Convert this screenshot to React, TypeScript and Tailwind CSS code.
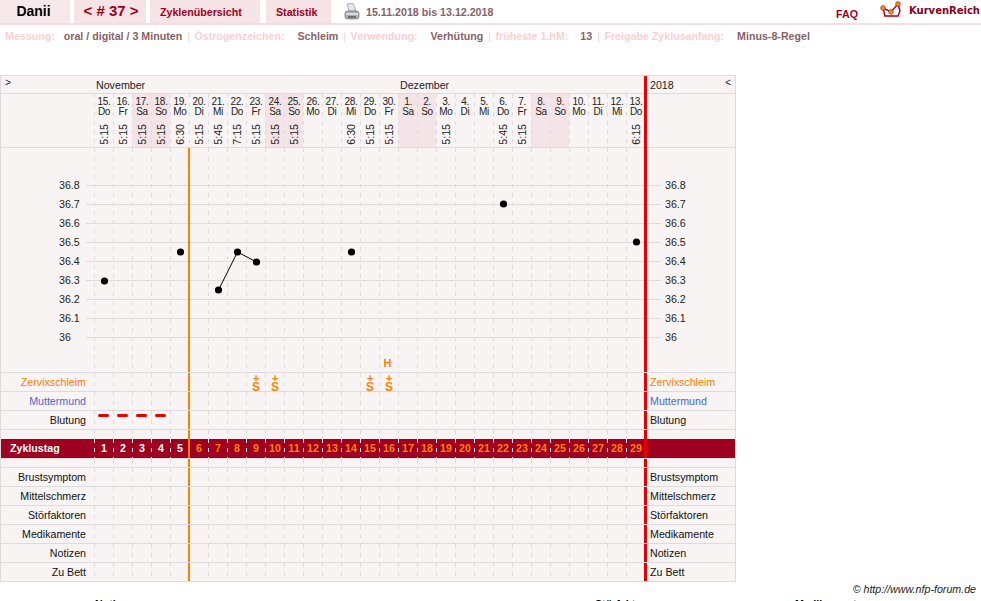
const weekdays = ["Do", "Fr", "Sa", "So", "Mo", "Di", "Mi"];
const times: Record<number, string> = {
  0: "5:15", 1: "5:15", 2: "5:15", 3: "5:15", 4: "6:30", 5: "5:15", 6: "5:45", 7: "7:15", 8: "5:15", 9: "5:15",
  10: "5:15", 13: "6:30", 14: "5:15", 15: "5:15", 18: "5:15", 21: "5:45", 22: "5:15", 28: "6:15",
};
const days = Array.from({ length: 29 }, (_, i) => {
  const date = i < 16 ? 15 + i : i - 15;
  const weekday = weekdays[i % 7];
  return { i, date, weekday, weekend: weekday === "Sa" || weekday === "So", time: times[i] };
});
const scale = ["36.8", "36.7", "36.6", "36.5", "36.4", "36.3", "36.2", "36.1", "36"];
const points = [
  { i: 0, y: 281 },
  { i: 4, y: 252 },
  { i: 6, y: 290 },
  { i: 7, y: 252 },
  { i: 8, y: 262 },
  { i: 13, y: 252 },
  { i: 21, y: 204 },
  { i: 28, y: 242 },
];
const dash = "bg-[linear-gradient(#dddbdb_4px,transparent_4px)] bg-[length:1px_9px] bg-repeat-y";
const dashLight = "bg-[linear-gradient(#f6e6e8_4px,transparent_4px)] bg-[length:1px_9px] bg-repeat-y";

function px(i: number) {
  return 104 + i * 19;
}

function DayCells({
  light,
  orange = true,
  render,
}: {
  light?: boolean;
  orange?: boolean;
  render?: (i: number) => React.ReactNode;
}) {
  return (
    <div className="flex">
      {days.map((d) => (
        <div key={d.i} className={`relative h-full w-[19px] ${light ? dashLight : dash}`}>
          {orange && d.i === 5 && <div className="absolute inset-y-0 -left-px w-0.5 bg-[#ff8000]" />}
          {render?.(d.i)}
        </div>
      ))}
    </div>
  );
}

function RedBar({ through }: { through?: boolean }) {
  return <div className={`absolute top-0 -left-px w-[3px] bg-[#e60000] ${through ? "-bottom-px" : "bottom-0"}`} />;
}

function Row({
  label,
  color = "text-[#111111]",
  render,
}: {
  label: string;
  color?: string;
  render?: (i: number) => React.ReactNode;
}) {
  return (
    <div className="flex h-[19px] border-b border-[#dddbdb]">
      <div className={`w-[93px] pr-2 text-right leading-[18px] ${color}`}>{label}</div>
      <DayCells render={render} />
      <div className={`relative flex-1 pl-[5px] leading-[18px] ${color}`}>
        <RedBar />
        {label}
      </div>
    </div>
  );
}

function Spacer({ border }: { border?: boolean }) {
  return (
    <div className={`flex h-[9px] ${border ? "border-b border-[#dddbdb]" : ""}`}>
      <div className="w-[93px]" />
      <DayCells />
      <div className="relative flex-1">
        <RedBar />
      </div>
    </div>
  );
}

function Mucus() {
  return (
    <div className="flex flex-col items-center pl-px font-bold leading-[9px] text-[#ff8000]">
      <span className="mt-px">+</span>
      <span className="text-[12px]">S</span>
    </div>
  );
}

function Chart() {
  return (
    <div className="relative flex h-[225px] border-b border-[#dddbdb]">
      <div className="w-[93px] pt-[28px] pl-[58px] text-[#222222]">
        {scale.map((v) => (
          <div key={v} className="h-[19px] leading-[19px]">
            {v}
          </div>
        ))}
      </div>
      <DayCells
        render={(i) =>
          i === 15 ? (
            <span className="absolute top-[208px] left-0 w-[17px] text-center text-[11px] font-bold leading-[14px] text-[#ff8000]">
              H
            </span>
          ) : null
        }
      />
      <div className="relative flex-1 pt-[28px] pl-5 text-[#222222]">
        <RedBar />
        {scale.map((v) => (
          <div key={v} className="h-[19px] leading-[19px]">
            {v}
          </div>
        ))}
      </div>
      <svg className="absolute top-0 left-[85px]" width="576" height="224" viewBox="86 148 576 224">
        {scale.map((v, n) => (
          <g key={v}>
            <line x1="86" x2="644" y1={185.5 + n * 19} y2={185.5 + n * 19} stroke="#dddbdb" />
            <line x1="647" x2="661" y1={185.5 + n * 19} y2={185.5 + n * 19} stroke="#dddbdb" />
          </g>
        ))}
        <rect x="188" y="148" width="2" height="224" fill="#ff8000" />
        <polyline points="218.5,290 237.5,252 256.5,262" fill="none" stroke="#000000" strokeWidth="1" />
        {points.map((p) => (
          <circle key={p.i} cx={px(p.i) + 0.5} cy={p.y} r="3.6" fill="#000000" />
        ))}
      </svg>
    </div>
  );
}

function Printer() {
  return (
    <svg width="16" height="18" viewBox="0 0 16 18">
      <path d="M3 1 L9 0.5 L12 8 L5 8 Z" fill="#e2eaef" stroke="#8fa0aa" strokeWidth="0.8" />
      <path d="M1 10 Q1 8 4 8 L12 8 Q15 8 15 10 L15 14 Q15 16 12 16 L4 16 Q1 16 1 14 Z" fill="#a9aeb2" stroke="#77797c" strokeWidth="0.7" />
      <rect x="2" y="10" width="12" height="2" fill="#d8dbdd" />
      <rect x="4" y="13" width="8" height="2" fill="#6d7073" />
    </svg>
  );
}

function Logo() {
  return (
    <svg width="24" height="19" viewBox="0 0 24 19">
      <path d="M1 16 H23 M4 2 V18 M20 2 V18" stroke="#f4dfe1" strokeWidth="1" fill="none" />
      <path d="M3 7 L5 15 H18 L20 10 M3 7 L11 11 L18 3 L20 10" stroke="#a00020" strokeWidth="1.4" fill="none" />
      <circle cx="3" cy="7" r="2.4" fill="#f09010" stroke="#a00020" strokeWidth="0.5" />
      <circle cx="11" cy="11" r="2.4" fill="#f09010" stroke="#a00020" strokeWidth="0.5" />
      <circle cx="18" cy="3" r="2.4" fill="#f09010" stroke="#a00020" strokeWidth="0.5" />
    </svg>
  );
}

const info = [
  { label: "Messung:", value: "oral / digital / 3 Minuten", gap: "ml-[9px]" },
  { label: "Östrogenzeichen:", value: "Schleim", gap: "ml-[13px]" },
  { label: "Verwendung:", value: "Verhütung", gap: "ml-[13px]" },
  { label: "früheste 1.hM:", value: "13", gap: "ml-3" },
  { label: "Freigabe Zyklusanfang:", value: "Minus-8-Regel", gap: "ml-[13px]" },
];

export default function App() {
  return (
    <div className="h-[601px] w-[981px] overflow-hidden bg-white font-['Liberation_Sans',Arial,sans-serif] text-[10.67px]">
      <header className="flex h-[25px] items-start border-b-2 border-[#f4dde0]">
        <div className="flex h-[23px] w-[70px] items-center justify-center bg-[#f6e8ea] pr-[3px] text-[14px] font-bold text-black">
          Danii
        </div>
        <div className="ml-1 flex h-[23px] w-[72px] items-center justify-center bg-[#f6e3e6] pl-0.5 text-[15px] font-bold text-[#a00020]">
          &lt; # 37 &gt;
        </div>
        <div className="ml-1 flex h-[23px] w-[110px] items-center bg-[#f6e3e6] pl-2.5 font-bold text-[#a00020]">
          Zyklenübersicht
        </div>
        <div className="ml-1.5 flex h-[23px] w-[65px] items-center bg-[#f6e3e6] pl-2.5 font-bold text-[#a00020]">
          Statistik
        </div>
        <div className="ml-[13px] mt-[3px]">
          <Printer />
        </div>
        <div className="ml-[6px] h-[23px] font-bold leading-[24px] text-[#8a5f68]">15.11.2018 bis 13.12.2018</div>
        <div className="ml-auto mt-[7px] font-bold leading-[14px] text-[#a00020]">FAQ</div>
        <div className="ml-[22px] mt-[1px]">
          <Logo />
        </div>
        <div className="ml-[5px] mt-[4px] mr-px font-['DejaVu_Sans',sans-serif] text-[10px] font-bold leading-[14px] text-[#8a0018]">
          KurvenReich
        </div>
      </header>

      <div className="flex h-[50px] pl-[5px] pt-1 font-bold leading-[14px]">
        {info.map((item, n) => (
          <div key={item.label} className="flex">
            {n > 0 && <span className="ml-[5px] mr-[4.5px] font-normal text-[#fbd0d4]">|</span>}
            <span className="text-[#fbd0d4]">{item.label}</span>
            <span className={`${item.gap} text-[#8a5f68]`}>{item.value}</span>
          </div>
        ))}
      </div>

      <div className="w-[736px] border-x border-t border-[#dddbdb] bg-[#f8f4f4]">
        <div className="flex h-[18px] border-b border-[#dddbdb] leading-[18px] text-[#222222]">
          <div className="w-[95px] pt-px pl-1 text-[10px] leading-[11px]">&gt;</div>
          <div className="w-[304px]">November</div>
          <div className="w-[245px]">Dezember</div>
          <div className="relative flex flex-1 justify-between pl-[5px] pr-1">
            <RedBar through />
            <span>2018</span>
            <span className="pt-px text-[10px] leading-[11px]">&lt;</span>
          </div>
        </div>

        <div className="flex h-[54px] border-b border-[#dddbdb]">
          <div className="w-[93px]" />
          <div className="flex">
            {days.map((d) => (
              <div
                key={d.i}
                className={`flex h-full w-[19px] flex-col items-center pt-[3px] pl-px text-[10px] leading-[10px] text-[#222222] ${dash} ${
                  d.weekend ? "bg-[#f4e4e7]" : ""
                }`}
              >
                <span className="tracking-[-0.3px]">{d.date}.</span>
                <span className="tracking-[-0.3px]">{d.weekday}</span>
                {d.time && (
                  <span className="mt-auto mb-[2px] rotate-180 text-[10.67px] leading-[12px] [writing-mode:vertical-rl]">
                    {d.time}
                  </span>
                )}
              </div>
            ))}
          </div>
          <div className="relative flex-1">
            <RedBar through />
          </div>
        </div>

        <Chart />

        <Row label="Zervixschleim" color="text-[#ff8000]" render={(i) => ([8, 9, 14, 15].includes(i) ? <Mucus /> : null)} />
        <Row label="Muttermund" color="text-[#4a68d0]" />
        <Row
          label="Blutung"
          render={(i) => (i < 4 ? <div className="ml-1 mt-[3px] h-[3px] w-[11px] rounded-full bg-[#e60000]" /> : null)}
        />
        <Spacer />

        <div className="flex h-5 border-b border-[#dddbdb] bg-[linear-gradient(#a00020,#a00020)] bg-[length:100%_19px] bg-no-repeat">
          <div className="w-[93px] pl-[9px] font-bold leading-[19px] text-white">Zyklustag</div>
          <DayCells
            light
            render={(i) => (
              <div className={`h-[19px] w-full pl-px text-center font-bold leading-[19px] ${i < 5 ? "text-white" : "text-[#ff8000]"}`}>
                {i + 1}
              </div>
            )}
          />
          <div className="relative flex-1">
            <RedBar />
          </div>
        </div>

        <Spacer border />
        <Row label="Brustsymptom" />
        <Row label="Mittelschmerz" />
        <Row label="Störfaktoren" />
        <Row label="Medikamente" />
        <Row label="Notizen" />
        <Row label="Zu Bett" />
      </div>

      <div className="flex h-[15px] justify-end pr-[5px] italic leading-[15px] text-[#222222]">© http://www.nfp-forum.de</div>
      <div className="flex font-bold leading-[14px] text-black">
        <div className="ml-[95px] w-[500px]">Notizen</div>
        <div className="w-[200px]">Störfaktoren</div>
        <div>Medikamente</div>
      </div>
    </div>
  );
}
